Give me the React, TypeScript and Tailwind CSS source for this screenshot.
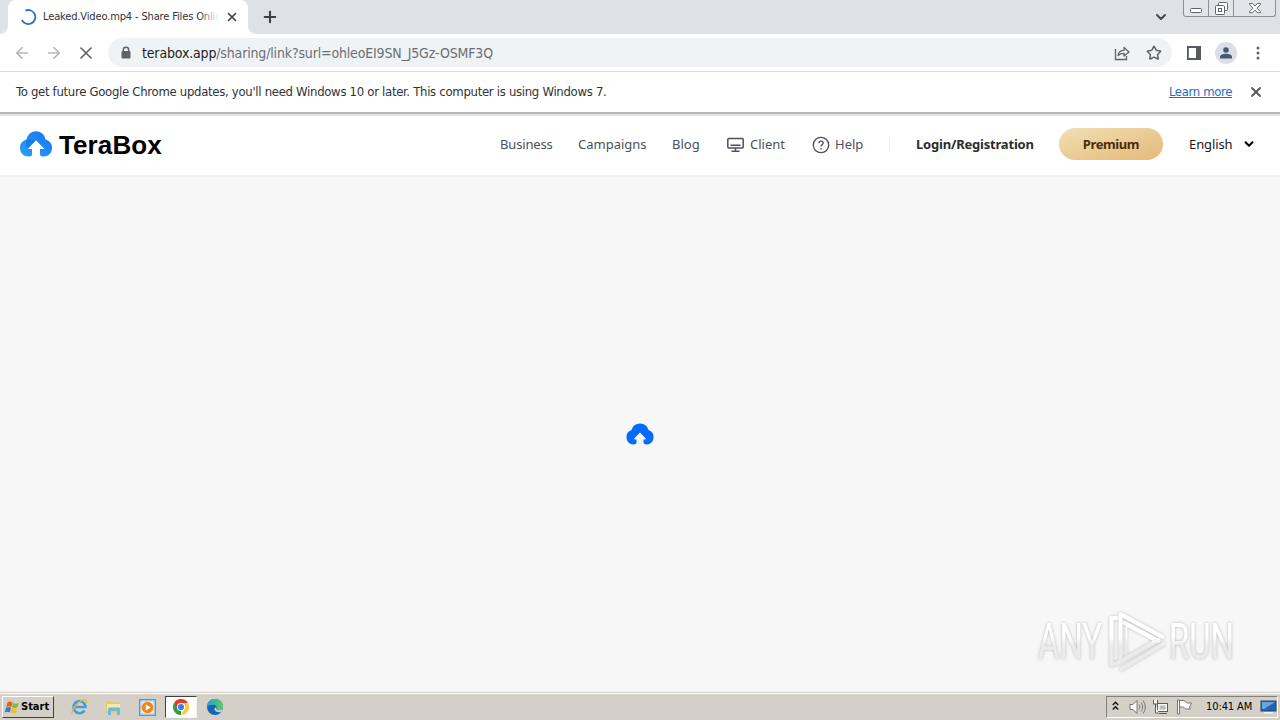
import { ArrowLeft, ArrowRight, ChevronDown, Plus, Star, X } from 'lucide-react';

const TabStrip = () => (
  <div className="h-[34px] bg-[#dee1e6] flex items-start pl-2 overflow-hidden">
    <div className="relative w-[240px] h-[34px] bg-white rounded-t-lg flex items-center pl-[13px]">
      <svg className="absolute -left-2 bottom-0 w-2 h-2" viewBox="0 0 8 8">
        <path d="M8 0v8H0a8 8 0 0 0 8-8Z" fill="#fff" />
      </svg>
      <svg className="absolute -right-2 bottom-0 w-2 h-2" viewBox="0 0 8 8">
        <path d="M0 0v8h8a8 8 0 0 1-8-8Z" fill="#fff" />
      </svg>
      <svg className="w-4 h-4 shrink-0" viewBox="0 0 16 16" fill="none" stroke="#2f6fc9" strokeWidth="1.8">
        <path d="M4.5 1.6A7 7 0 1 1 .9 10.8" />
      </svg>
      <div className="relative ml-[6px] w-[176px] shrink-0 overflow-hidden whitespace-nowrap text-[11px] leading-4 tracking-[-0.14px] text-[#303236]">
        Leaked.Video.mp4 - Share Files Onlin
        <div className="absolute right-0 top-0 h-4 w-5 bg-gradient-to-r from-transparent to-white" />
      </div>
      <X className="ml-[6px] w-[14px] h-[14px] shrink-0 text-[#3c4043]" strokeWidth={2.8} />
    </div>
    <Plus className="ml-[13px] mt-[8px] w-[18px] h-[18px] text-[#3c4043]" strokeWidth={2.8} />
    <div className="ml-auto flex">
      <ChevronDown className="mt-[9px] mr-[14px] w-4 h-4 text-[#46494d]" strokeWidth={3} />
      <div className="h-[17px] w-[93px] mr-[4px] rounded-b-[3px] border border-t-0 border-[#8d9095] bg-[#e1e4e9] flex">
        <div className="w-[25px] border-r border-[#8d9095] flex justify-center">
          <svg width="12" height="16" viewBox="0 0 12 16">
            <rect x=".5" y="8.5" width="11" height="4" rx="1" fill="#fff" stroke="#606368" />
          </svg>
        </div>
        <div className="w-[25px] border-r border-[#8d9095] flex justify-center">
          <svg width="14" height="16" viewBox="0 0 14 16" fill="#fff" stroke="#606368">
            <rect x="4.5" y="2.5" width="9" height="8" rx="1" />
            <rect x="1.5" y="5.5" width="9" height="9" rx="1" />
            <rect x="4.5" y="8.5" width="3" height="3" />
          </svg>
        </div>
        <div className="flex-1 flex justify-center">
          <svg width="14" height="16" viewBox="0 0 14 16">
            <path d="M1.500 3.500h3L7 6l2.500-2.500h3V4.500L9 8.200l3.500 3.500v1h-3L7 10.200l-2.500 2.500h-3v-1L5 8.200 1.500 4.500Z" fill="#fff" stroke="#606368" />
          </svg>
        </div>
      </div>
    </div>
  </div>
);

const Toolbar = () => (
  <div className="h-[38px] bg-white border-b border-[#d9dbde] flex items-center pl-[13px] pr-[13px]">
    <ArrowLeft className="w-[18px] h-[18px] text-[#b4b6b9]" strokeWidth={2.3} />
    <ArrowRight className="ml-[14px] w-[18px] h-[18px] text-[#b4b6b9]" strokeWidth={2.3} />
    <X className="ml-[13px] w-5 h-5 text-[#5f6368]" />
    <div className="ml-[12px] w-[1064px] h-[29px] rounded-full bg-[#f0f3f5] flex items-center pl-[12px] pr-[10px]">
      <svg width="12" height="14" viewBox="0 0 12 14">
        <path d="M3.300 6V4a2.700 2.700 0 0 1 5.400 0v2" fill="none" stroke="#5f6368" strokeWidth="1.500" />
        <rect x="1.500" y="5" width="9" height="7.500" rx="1" fill="#5f6368" />
      </svg>
      <div className="ml-[10px] whitespace-nowrap text-[14px] leading-5 tracking-[-0.16px] text-[#6b6f74]">
        <span className="text-[#202124]">terabox.app</span>
        /sharing/link?surl=ohleoEI9SN_J5Gz-OSMF3Q
      </div>
      <svg className="ml-auto" width="16" height="16" viewBox="0 0 16 16" fill="none" stroke="#5f6368" strokeWidth="1.300">
        <path d="M1.500 4v10.500h11V11" />
        <path d="M4 10.500c.6-3.800 2.600-5.200 6-5.200V2.500l5 4.500-5 4V8.300c-2.600 0-4.400.6-6 2.200Z" strokeLinejoin="round" />
      </svg>
      <Star className="ml-[16px] w-4 h-4 text-[#5f6368]" strokeWidth={2.3} />
    </div>
    <svg className="ml-[15px]" width="14" height="14" viewBox="0 0 14 14">
      <path d="M0 0h14v14H0ZM1.800 2v10H9V2Z" fill="#56595d" fillRule="evenodd" />
    </svg>
    <div className="ml-[14px] w-[22px] h-[22px] rounded-full bg-[#dce0e6] flex items-center justify-center">
      <svg width="12" height="12" viewBox="0 0 12 12" fill="#4a5878">
        <circle cx="6" cy="3" r="2.800" />
        <path d="M0 11.500V10c0-2 3-3.200 6-3.200s6 1.200 6 3.200v1.500Z" />
      </svg>
    </div>
    <svg className="ml-[19px]" width="4" height="14" viewBox="0 0 4 14" fill="#5f6368">
      <circle cx="2" cy="2" r="1.500" />
      <circle cx="2" cy="7" r="1.500" />
      <circle cx="2" cy="12" r="1.500" />
    </svg>
  </div>
);

const InfoBar = () => (
  <div className="h-[42px] bg-white border-b-2 border-[#b7b7b7] flex items-center px-4 text-[13px] whitespace-nowrap">
    <span className="tracking-[-0.3px] text-[#303236]">
      To get future Google Chrome updates, you'll need Windows 10 or later. This computer is using Windows 7.
    </span>
    <a className="ml-auto tracking-[-0.35px] text-[#2c6bc0] underline">Learn more</a>
    <X className="ml-[16px] w-4 h-4 text-[#56595d]" strokeWidth={2.8} />
  </div>
);

const SiteHeader = () => (
  <header className="h-[61px] bg-white border-t-2 border-[#e3e3e3] flex items-center pl-5 pr-[24px] pb-[3px] text-[13px] whitespace-nowrap">
    <svg width="32" height="26" viewBox="0 0 32 26">
      <defs>
        <linearGradient id="cloud" x1="1" y1="0" x2="0" y2="1">
          <stop offset="0" stopColor="#1674ee" />
          <stop offset="1" stopColor="#2aa0ff" />
        </linearGradient>
      </defs>
      <path d="M6.500 8.500A9.600 9.600 0 0 1 25.500 8.500 8.700 8.700 0 0 1 32 17c0 5-4 8.500-8.500 8.500-2.500 0-3.500-.8-3.500-2V18h4.500L16 9.500 7.500 18H12v5.500c0 1.200-1 2-3.500 2C4 25.500 0 22 0 17A8.700 8.700 0 0 1 6.500 8.500Z" fill="url(#cloud)" />
      <path d="M6.500 8.500C11 7.500 14 9 16 11l-3 3-5 4C6 14 5.500 12 6.500 8.500Z" fill="#0e66df" opacity=".45" />
      <path d="M16 9.500 10 15.800c-.8 1-.3 1.700.7 1.700H12v8h8v-8h1.300c1 0 1.500-.7.7-1.700Z" fill="#fff" />
    </svg>
    <span className="ml-[7px] mt-[2px] font-['Liberation_Sans',sans-serif] font-bold text-[26px] tracking-[0.1px] leading-none text-black">TeraBox</span>
    <nav className="ml-auto flex items-center pt-px font-['Noto_Sans',sans-serif] text-[#4c4f5e]">
      <span className="w-[78px] pt-px tracking-[-0.15px]">Business</span>
      <span className="w-[94px] pt-px">Campaigns</span>
      <span className="w-[55px] pt-px">Blog</span>
      <svg width="17" height="16" viewBox="0 0 17 16" fill="none" stroke="#4c4f5e" strokeWidth="1.500">
        <rect x=".8" y="1.500" width="15.400" height="9.500" rx="1" />
        <path d="M3.500 8.300h10M8.500 11v3M4.500 14.300h8" />
      </svg>
      <span className="ml-[6px] w-[62px] pt-px">Client</span>
      <svg width="18" height="18" viewBox="0 0 18 18" fill="none" stroke="#4c4f5e" strokeWidth="1.300">
        <circle cx="9" cy="9" r="7.700" />
        <path d="M6.900 7.200c0-2.800 4.300-2.700 4.300-.2 0 1.700-2.200 1.600-2.200 3.500M9 12v1.500" />
      </svg>
      <span className="ml-[5px] w-[54px] pt-px">Help</span>
      <span className="w-px h-4 bg-[#f1f1f4]" />
    </nav>
    <span className="ml-[26px] w-[143px] pt-[2px] font-['Noto_Sans',sans-serif] font-bold tracking-[-0.2px] text-[#2b2c31]">Login/Registration</span>
    <button className="w-[104px] h-8 pt-px rounded-full bg-gradient-to-br from-[#f1dfb4] to-[#e5b977] font-['Noto_Sans',sans-serif] font-bold tracking-[-0.4px] text-[#4b2c0a]">Premium</button>
    <span className="ml-[26px] w-[53px] pt-[2px] font-['Noto_Sans',sans-serif] tracking-[-0.1px] text-[#191919]">English</span>
    <ChevronDown className="w-[14px] h-[14px] text-black" strokeWidth={3.500} />
  </header>
);

const Watermark = () => (
  <svg className="absolute right-[28px] bottom-[13px]" width="220" height="76" viewBox="0 0 220 76">
    <defs>
      <linearGradient id="fade" gradientUnits="userSpaceOnUse" x1="0" y1="10" x2="0" y2="66">
        <stop offset=".45" stopColor="#fff" />
        <stop offset=".6" stopColor="#ebebeb" />
      </linearGradient>
      <filter id="halo" x="-10%" y="-10%" width="120%" height="120%">
        <feDropShadow dx="0" dy="0" stdDeviation="1.800" floodColor="#888" floodOpacity=".6" />
      </filter>
    </defs>
    <g filter="url(#halo)" fill="url(#fade)">
      <text x="6" y="57" textLength="64" lengthAdjust="spacingAndGlyphs" fontSize="50" fontFamily="Roboto, sans-serif">ANY</text>
      <text x="137" y="57" textLength="65" lengthAdjust="spacingAndGlyphs" fontSize="50" fontFamily="Roboto, sans-serif">RUN</text>
      <g transform="translate(-1.5 0)" fill="none" stroke="url(#fade)" strokeWidth="4" strokeLinejoin="round" strokeLinecap="round">
        <path d="M90 58V12l42 23" />
        <path d="M96 23v32l28-16Z" strokeWidth="1.500" />
        <path d="M86 16h-5v47l8-3 39-22M91 67l42-25M94 21l34 18" />
      </g>
    </g>
  </svg>
);

const Loader = () => (
  <svg width="28" height="22" viewBox="0 0 28 22">
    <path d="M5.500 7A8.800 8.800 0 0 1 22.500 7 7.500 7.500 0 0 1 27.500 14.500c0 4-3.300 7-6.500 7-2.500 0-3.500-1-3.500-2V16.500h1.500c.8 0 1-.6.500-1.200L14 9.500l-5.500 5.800c-.5.600-.3 1.200.5 1.200h1.500v3c0 1-1 2-3.500 2-3.200 0-6.500-3-6.500-7A7.500 7.500 0 0 1 5.500 7Z" fill="#066bfa" />
  </svg>
);

const Taskbar = () => (
  <div className="h-[28px] bg-[#d4d0c8] border-t border-[#d4d0c8] flex flex-col">
    <div className="h-px bg-white" />
    <div className="flex-1 flex items-center px-[2px]">
      <button className="w-[52px] h-[22px] bg-[#d4d0c8] border border-white border-r-[#404040] border-b-[#404040] flex items-center pl-[1px] text-[11px] font-bold text-black">
        <svg className="shrink-0 mr-[1px]" width="16" height="15" viewBox="0 0 15 15">
          <path d="M3 2.500C5 1 6.500 1.500 8 2.500L6.800 7C5 6 3.500 6 1.700 7Z" fill="#e85d25" />
          <path d="M8.700 3c2 1 3.500.8 5.500 0L13 7.300c-2 1-3.500.9-5.500 0Z" fill="#83bb37" />
          <path d="M1.500 7.700c2-1 3.500-.9 5 .2L5.300 12.500c-1.700-1-3.200-1-5.100 0Z" fill="#2f7fd0" />
          <path d="M7.200 8c2 1 3.600.9 5.500.2l-1.200 4.500c-2 1-3.500.8-5.500-.2Z" fill="#f9bd2b" />
        </svg>
        Start
      </button>
      <div className="ml-[17px] flex items-center">
        <svg className="mr-[17px]" width="17" height="18" viewBox="0 0 17 18" fill="none">
          <path d="M13.500 12.500A6 6 0 1 1 14.500 9H4" stroke="#3f9fdf" strokeWidth="2.600" />
          <path d="M1.500 16C-.5 13 6 4 12.500 1.800c3-.8 3.500.8 2.500 3" stroke="#e9b93c" strokeWidth="1.400" />
        </svg>
        <svg className="mr-[17px]" width="17" height="17" viewBox="0 0 17 17">
          <path d="M1 2h5l1 1.500h8V14H1Z" fill="#e9ca6b" />
          <path d="M2 5h13v7H2Z" fill="#f9e9a6" />
          <path d="M3 10c0-1 .6-1.500 1.500-1.500h9c1 0 1.500.5 1.500 1.500v6h-3v-4H6v4H3Z" fill="#72b9db" />
        </svg>
        <svg className="mr-[9px]" width="17" height="17" viewBox="0 0 17 17">
          <rect x=".5" y=".5" width="16" height="16" fill="#a8cce8" stroke="#5a92c0" />
          <rect x="2.500" y="2.500" width="12" height="12" fill="#e7f1f9" />
          <circle cx="8.500" cy="8.500" r="5.800" fill="#f08519" />
          <path d="m6.800 5.500 5 3-5 3Z" fill="#fff" />
        </svg>
        <div className="w-[32px] h-[22px] bg-white border border-[#404040] border-r-[#f4f4f4] border-b-[#f4f4f4] flex items-center justify-center">
          <svg className="shrink-0" width="16" height="16" viewBox="0 0 16 16">
            <path d="M8 8v8A8 8 0 0 1 1.070 4Z" fill="#2a9c4a" />
            <path d="M8 4h6.930A8 8 0 0 1 8 16l3.500-6Z" fill="#fcc934" />
            <path d="M1.070 4A8 8 0 0 1 14.930 4H8L4.500 10Z" fill="#e33b2e" />
            <circle cx="8" cy="8" r="4" fill="#fff" />
            <circle cx="8" cy="8" r="3.100" fill="#3b7ded" />
          </svg>
        </div>
        <svg className="ml-[10px]" width="16" height="16" viewBox="0 0 16 16">
          <defs>
            <linearGradient id="edge" x1="0" y1="0" x2="1" y2="0">
              <stop offset="0" stopColor="#1f9de0" />
              <stop offset="1" stopColor="#5cd05a" />
            </linearGradient>
          </defs>
          <circle cx="8" cy="8" r="8" fill="#1565b5" />
          <path d="M0 8A8 8 0 0 1 16 7.500c0 2.500-2 3.700-4.200 3.700-1.700 0-2.500-.7-2.500-1.300.8-.9.900-3.900-2.800-4.100C3 5.600.5 7 0 8Z" fill="url(#edge)" />
          <path d="M9.300 9.900c0 .6.800 1.300 2.500 1.300 1.500 0 3-.5 3.700-1.700L14.500 13c-3 1-7-.5-7-3 0-1 .8-1.500 1.800-1.500Z" fill="#d4d0c8" />
        </svg>
      </div>
      <div className="ml-auto w-[172px] h-[22px] border border-[#808080] border-r-white border-b-white flex items-center pl-[5px] text-[11px] text-black">
        <svg className="mb-[2px]" width="7" height="10" viewBox="0 0 7 10" fill="none" stroke="#111" strokeWidth="1.400">
          <path d="M.8 4 3.500 1.300 6.200 4M.8 8.500l2.700-2.700 2.700 2.700" />
        </svg>
        <svg className="ml-[10px]" width="17" height="16" viewBox="0 0 17 16" fill="none" stroke="#77756f">
          <path d="M1 5.500h3l4-4v13l-4-4H1Z" fill="#fff" />
          <path d="M10 5.500c1 1.500 1 3.500 0 5M12 3.500c2 2.500 2 6.500 0 9M14 1.500c3 4 3 9 0 13" />
        </svg>
        <svg className="ml-[6px]" width="17" height="16" viewBox="0 0 17 16" fill="#f7f7f4" stroke="#5e5c57">
          <rect x="5.500" y="4.500" width="10" height="8" />
          <path d="M7.500 6.500h6v4h-6Z" fill="#b9b9b6" stroke="none" />
          <path d="M7 14.500h8M1.500 1v4h4V1M3.500 5v9h3" />
        </svg>
        <svg className="ml-[7px]" width="17" height="16" viewBox="0 0 17 16" fill="#fff" stroke="#77756f">
          <path d="M3.500 1.500h4c2 0 2 2.500 4 2.500h4l-2 4 1 2h-4c-2 0-2-2-4-2h-3" />
          <path d="M1.500 1v14h2V1Z" />
        </svg>
        <span className="ml-[13px] pt-px whitespace-nowrap tracking-[-0.1px]">10:41 AM</span>
        <svg className="ml-auto" width="17" height="14" viewBox="0 0 17 14">
          <rect x="1" y="1" width="15" height="10" fill="#2264b4" stroke="#28476f" />
          <path d="M2 2h13L4 9H2Z" fill="#67a5e3" />
          <path d="M4 12h9v1.500H4Z" fill="#f4f4f4" />
        </svg>
      </div>
    </div>
  </div>
);

const App = () => (
  <div className="w-[1280px] h-[720px] overflow-hidden flex flex-col bg-[#f7f7f7] font-['DejaVu_Sans_Condensed','DejaVu_Sans',sans-serif]">
    <TabStrip />
    <Toolbar />
    <InfoBar />
    <SiteHeader />
    <main className="relative flex-1 border-t-2 border-[#f1f1f1] border-b flex items-center justify-center">
      <Loader />
      <Watermark />
    </main>
    <Taskbar />
  </div>
);

export default App;
